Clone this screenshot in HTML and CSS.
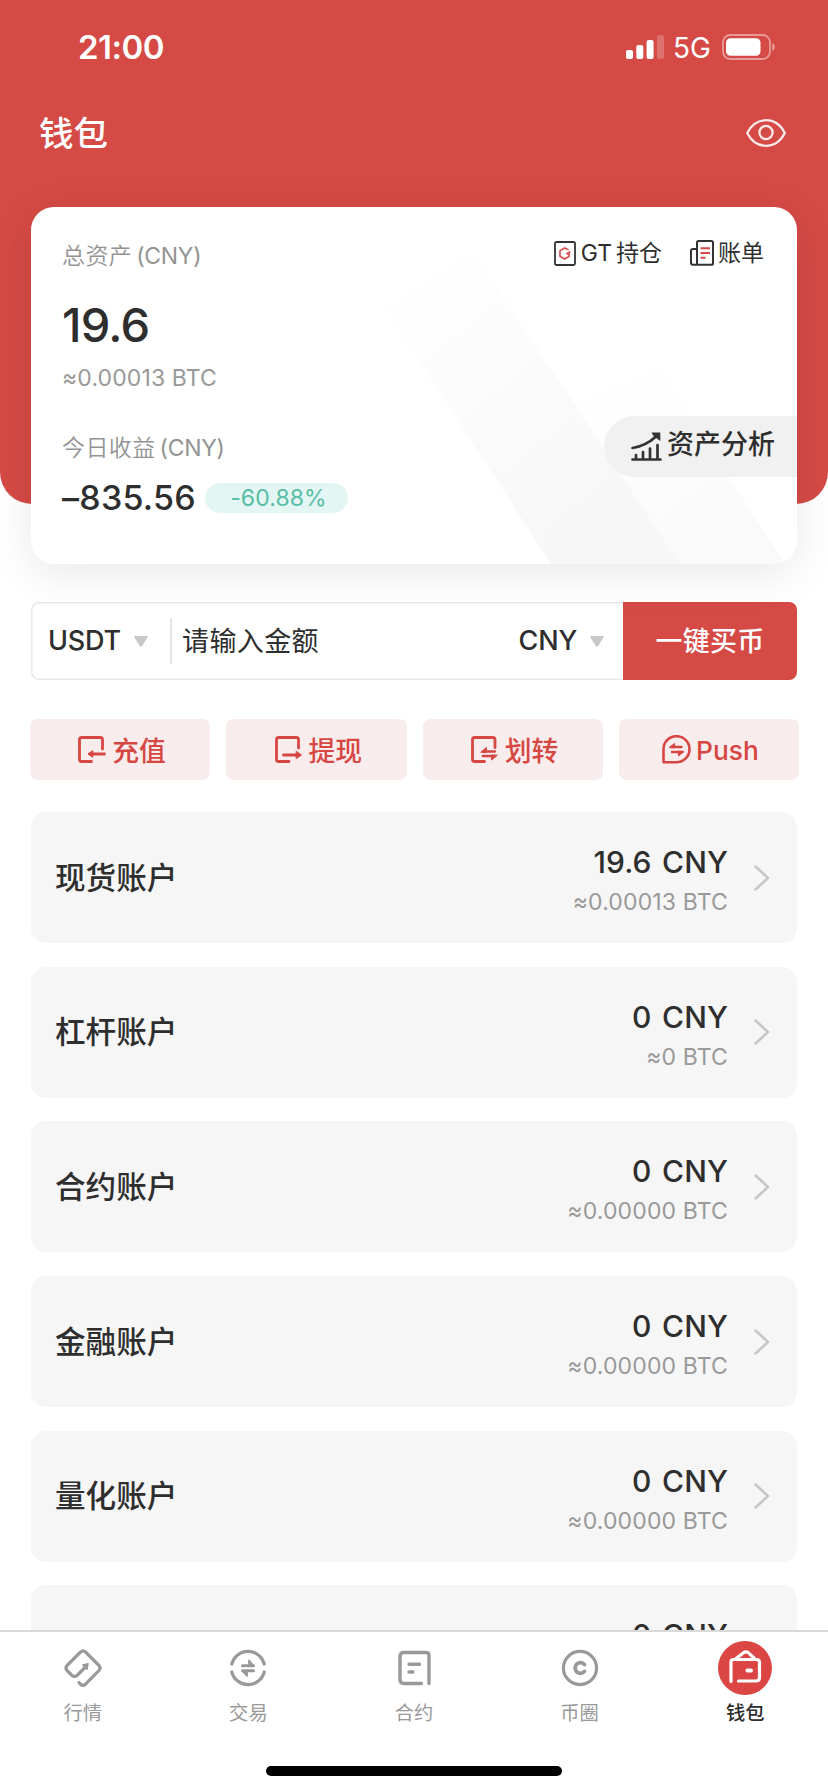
FILE: index.html
```html
<!DOCTYPE html>
<html lang="zh-CN">
<head>
<meta charset="utf-8">
<title>钱包</title>
<link rel="stylesheet" href="styles.css">
</head>
<body>
<div class="app">
  <main class="content">
    <header class="hero">
      <div class="status">
        <span class="clock">21:00</span>
        <div class="status-right">
          <svg class="signal" width="38" height="24" viewBox="0 0 38 24" fill="#fff"><rect x="0" y="15" width="7" height="9" rx="2"/><rect x="10.3" y="10" width="7" height="14" rx="2"/><rect x="20.6" y="5" width="7" height="19" rx="2"/><rect x="31" y="0" width="7" height="24" rx="2" opacity=".22"/></svg>
          <span class="network">5G</span>
          <svg class="battery" width="54" height="26" viewBox="0 0 54 26"><rect x="1" y="1" width="47" height="24" rx="7.5" fill="none" stroke="#fff" stroke-opacity=".45" stroke-width="1.8"/><rect x="4" y="4.2" width="34.5" height="17.6" rx="4.5" fill="#fff"/><path d="M50.3 9v8c3.2-1.4 3.2-6.600 0-8z" fill="#fff" opacity=".5"/></svg>
        </div>
      </div>
      <div class="titlebar">
        <h1 class="title">钱包</h1>
        <svg class="eye" width="40" height="28" viewBox="0 0 40 28" fill="none" stroke="#fff" stroke-opacity=".88" stroke-width="2.300"><path d="M1.200 14C5.500 5.500 12.500 1.200 20 1.200S34.500 5.500 38.800 14C34.500 22.500 27.500 26.800 20 26.800S5.500 22.500 1.200 14z" stroke-linejoin="round"/><circle cx="20" cy="13.500" r="6.600"/></svg>
      </div>
      <section class="card">
        <svg class="card-bg" width="766" height="357" viewBox="0 0 766 357">
          <defs>
            <linearGradient id="band" x1="0" y1="0" x2=".75" y2="1"><stop offset=".08" stop-color="#f7f7f7" stop-opacity="0"/><stop offset=".9" stop-color="#f7f7f7"/></linearGradient>
          </defs>
          <path d="M353 100L441 43L649 357H520z" fill="url(#band)"/>
          <path d="M539 189L629 163L754 357H649z" fill="url(#band)" opacity=".65"/>
        </svg>
        <div class="totals">
          <p class="label">总资产<span class="unit">(CNY)</span></p>
          <p class="total">19.6</p>
          <p class="total-btc">≈0.00013 BTC</p>
          <p class="label">今日收益<span class="unit">(CNY)</span></p>
          <p class="profit"><span class="profit-value">–835.56</span><span class="pill">-60.88%</span></p>
        </div>
        <div class="side">
          <nav class="links">
            <a class="link link-gt">
              <svg width="22" height="25" viewBox="0 0 22 25" fill="none"><rect x="1" y="1" width="20" height="23" rx="1.500" stroke="#333" stroke-width="1.800"/><path d="M14.600 8.900L10.700 7L6 9.600V15.300L10.700 18L15 15.400V12.400H12.200M13 13.400L16 10.600" stroke="#d9474a" stroke-width="1.600"/></svg>
              <span>GT<span class="gt-cjk">持仓</span></span>
            </a>
            <a class="link link-bill">
              <svg width="24" height="26" viewBox="0 0 24 26" fill="none"><path d="M7 24.800V2.600Q7 1 8.600 1H21.400Q23 1 23 2.600V23.200Q23 24.800 21.400 24.800H3Q1 24.800 1 22.800V11Q1 9 3 9H7" stroke="#333" stroke-width="2"/><path d="M10.500 8.200H20M10.500 13H20M10.500 17.800H15.500" stroke="#d9474a" stroke-width="1.900"/></svg>
              <span>账单</span>
            </a>
          </nav>
          <a class="analysis">
            <svg width="31" height="29" viewBox="0 0 31 29" fill="none" stroke="#333" stroke-width="2.700" stroke-linecap="round"><path d="M1.500 16C11 14.500 18 11 25 4.500"/><path d="M20.500 0.500H29.300V9L26.500 7L22.500 4z" fill="#333" stroke="none"/><path d="M1.500 27.500H29.500M5 27V23M12 27V20M19 27V16.500M26.500 27V13"/></svg>
            <span class="analysis-text">资产分析</span>
          </a>
        </div>
      </section>
    </header>

    <section class="buy">
      <div class="coin">USDT<i class="caret"></i></div>
      <div class="amount">请输入金额</div>
      <div class="fiat">CNY<i class="caret"></i></div>
      <button class="buy-btn">一键买币</button>
    </section>

    <section class="actions">
      <a class="action">
        <svg width="28" height="27" viewBox="0 0 28 27" fill="none" stroke="#d64642" stroke-width="2.800" stroke-linecap="round" stroke-linejoin="round"><path d="M24.500 13V3.500Q24.500 1.500 22.500 1.500H3.500Q1.500 1.500 1.500 3.500V23.500Q1.500 25.500 3.500 25.500H13.500"/><path d="M26.500 18H12"/><path d="M14.500 14.800L10 18L14.500 21.200z" fill="#d64642" stroke-width="1"/></svg>
        <span class="action-text">充值</span>
      </a>
      <a class="action">
        <svg width="28" height="27" viewBox="0 0 28 27" fill="none" stroke="#d64642" stroke-width="2.800" stroke-linecap="round" stroke-linejoin="round"><path d="M23.500 12V3.500Q23.500 1.500 21.500 1.500H3.500Q1.500 1.500 1.500 3.500V23.500Q1.500 25.500 3.500 25.500H14"/><path d="M8.500 19H23"/><path d="M21.500 15.500L26.500 19L21.500 22.500z" fill="#d64642" stroke-width="1"/></svg>
        <span class="action-text">提现</span>
      </a>
      <a class="action">
        <svg width="28" height="27" viewBox="0 0 28 27" fill="none" stroke="#d64642" stroke-width="2.800" stroke-linecap="round" stroke-linejoin="round"><path d="M24 11.500V3.500Q24 1.500 22 1.500H3.500Q1.500 1.500 1.500 3.500V23.500Q1.500 25.500 3.500 25.500H13.500"/><path d="M12 15.500H24M12 20H24" stroke-width="2.500"/><path d="M10 16L15.500 11.500V16zM26 19.500L20.500 24V19.500z" fill="#d64642" stroke-width="1"/></svg>
        <span class="action-text">划转</span>
      </a>
      <a class="action action-push">
        <svg width="29" height="29" viewBox="0 0 29 29" fill="none" stroke="#d64642" stroke-width="2.600" stroke-linecap="round" stroke-linejoin="round"><path d="M1.500 27.200V14.500A13 13 0 1 1 14.500 27.200z"/><path d="M9 12H19.500M10 17H20.500" stroke-width="2.400"/><path d="M7.500 12.300L12.500 8.500V12.300zM21.500 16.700L16.500 21V16.700z" fill="#d64642" stroke-width="1"/></svg>
        <span class="action-text">Push</span>
      </a>
    </section>

    <section class="accounts">
      <a class="account"><span class="name">现货账户</span><span class="balance"><b class="value">19.6 CNY</b><span class="btc">≈0.00013 BTC</span></span><svg class="chev" width="16" height="26" viewBox="0 0 16 26"><path d="M1.500 1.500L14 13L1.500 24.500"/></svg></a>
      <a class="account"><span class="name">杠杆账户</span><span class="balance"><b class="value">0 CNY</b><span class="btc">≈0 BTC</span></span><svg class="chev" width="16" height="26" viewBox="0 0 16 26"><path d="M1.500 1.500L14 13L1.500 24.500"/></svg></a>
      <a class="account"><span class="name">合约账户</span><span class="balance"><b class="value">0 CNY</b><span class="btc">≈0.00000 BTC</span></span><svg class="chev" width="16" height="26" viewBox="0 0 16 26"><path d="M1.500 1.500L14 13L1.500 24.500"/></svg></a>
      <a class="account"><span class="name">金融账户</span><span class="balance"><b class="value">0 CNY</b><span class="btc">≈0.00000 BTC</span></span><svg class="chev" width="16" height="26" viewBox="0 0 16 26"><path d="M1.500 1.500L14 13L1.500 24.500"/></svg></a>
      <a class="account"><span class="name">量化账户</span><span class="balance"><b class="value">0 CNY</b><span class="btc">≈0.00000 BTC</span></span><svg class="chev" width="16" height="26" viewBox="0 0 16 26"><path d="M1.500 1.500L14 13L1.500 24.500"/></svg></a>
      <a class="account"><span class="balance"><b class="value">0 CNY</b></span><span class="chev"></span></a>
    </section>
  </main>

  <nav class="tabbar">
    <div class="tabs">
      <a class="tab">
        <svg width="54" height="54" viewBox="0 0 54 54" fill="none" stroke="#999" stroke-width="3.200" stroke-linecap="round" stroke-linejoin="round"><path d="M23 41.500L24.500 43.200Q27 45.500 29.500 43.200L43 29.500Q45.200 27 43 24.500L29.500 11Q27 8.800 24.500 11L11 24.500Q8.800 27 11 29.500L16 34.500Q18.500 36.500 21 34.500L29.500 26"/><path d="M26.800 24L32 22.700L31 28.200z" fill="#999" stroke-width="1.500"/></svg>
        <span>行情</span>
      </a>
      <a class="tab">
        <svg width="54" height="54" viewBox="0 0 54 54" fill="none" stroke="#999" stroke-width="3.200" stroke-linecap="round" stroke-linejoin="round"><path d="M10.800 23A16.700 16.700 0 0 1 43.200 23M10.800 31A16.700 16.700 0 0 0 43.200 31"/><path d="M21.500 24.800H32.500M21.500 29.800H32.500" stroke-width="3"/><path d="M28 19.500L32.500 24.500H28zM26 35L21.500 30H26z" fill="#999" stroke-width="1.800"/></svg>
        <span>交易</span>
      </a>
      <a class="tab">
        <svg width="54" height="54" viewBox="0 0 54 54" fill="none" stroke="#999" stroke-width="3.400" stroke-linecap="round" stroke-linejoin="round"><path d="M42 42.500V14.500Q42 11.500 39 11.500H17Q13 11.500 13 15.500V38.500Q13 42.500 17 42.500H34.500M22 23.300H32.500M22 31H26"/></svg>
        <span>合约</span>
      </a>
      <a class="tab">
        <svg width="54" height="54" viewBox="0 0 54 54" fill="none" stroke="#999" stroke-width="3.200" stroke-linecap="round"><circle cx="27" cy="27" r="16.600"/><path d="M31.500 23.600A5.300 5.300 0 1 0 31.500 30.400" stroke-width="3.800"/></svg>
        <span>币圈</span>
      </a>
      <a class="tab tab-on">
        <svg width="54" height="54" viewBox="0 0 54 54" fill="none" stroke="#fff" stroke-width="3.200" stroke-linecap="round" stroke-linejoin="round"><circle cx="27" cy="27" r="27" fill="#db4644" stroke="none"/><path d="M13 40.500V21Q13 18.500 15.500 18.500H38.500Q41.500 18.500 41.500 21.500V36.500Q41.500 40 38 40H20.500"/><path d="M18 17.500L25.500 11.800Q28 10 30.500 11.800L36.500 17.500"/><path d="M29.500 29.500H33" stroke-width="4"/></svg>
        <span>钱包</span>
      </a>
    </div>
    <div class="home"></div>
  </nav>
</div>
</body>
</html>
```
FILE: styles.css
```css
* { box-sizing: border-box; margin: 0; padding: 0; }

body {
  background: #fff;
  color: #2e2e2e;
  font-family: Inter, "Noto Sans CJK SC", sans-serif;
  overflow: hidden;
}

svg { display: block; flex: none; }

.app { display: flex; flex-direction: column; width: 828px; height: 1792px; overflow: hidden; }
.content { flex: 1; min-height: 0; overflow: hidden; }

/* Header */
.hero { height: 504px; padding: 0 31px; background: #d54a45; border-radius: 0 0 32px 32px; color: #fff; }
.status { display: flex; justify-content: space-between; align-items: center; height: 94px; padding: 0 21px 0 47px; }
.clock { font-size: 33px; font-weight: 600; line-height: 40px; letter-spacing: -.5px; }
.status-right { display: flex; align-items: center; }
.network { margin: 1px 11px 0 9px; font-size: 28px; line-height: 32px; }
.titlebar { display: flex; justify-content: space-between; align-items: center; height: 78px; padding: 0 11px 0 8px; }
.title { padding-top: 2px; font-size: 34.500px; font-weight: 500; line-height: 40px; }

/* Balance card */
.card {
  position: relative;
  display: flex;
  justify-content: space-between;
  height: 357px;
  margin-top: 35px;
  border-radius: 23px;
  background: #fff;
  color: #2e2e2e;
  box-shadow: 0 10px 44px rgba(0, 0, 0, .09);
  overflow: hidden;
}
.card-bg { position: absolute; left: 0; top: 0; }
.totals { position: relative; padding: 34px 0 0 31px; }
.label { font-size: 23px; font-weight: 350; line-height: 30px; color: #939393; letter-spacing: .4px; }
.unit { margin-left: 4px; font-weight: 400; letter-spacing: -.3px; }
.total { margin-top: 29px; font-size: 47px; font-weight: 500; line-height: 50px; letter-spacing: -.8px; }
.total-btc { margin: 13px 0 40px; font-size: 23px; line-height: 30px; color: #999; letter-spacing: .12px; }
.profit { display: flex; align-items: center; margin-top: 20px; }
.profit-value { font-size: 34px; font-weight: 500; line-height: 30px; letter-spacing: .25px; }
.pill { width: 143px; height: 30px; margin-left: 9px; padding-left: 4px; border-radius: 15px; background: #e3f6f3; color: #58bda3; font-size: 23px; line-height: 30px; text-align: center; letter-spacing: .1px; }
.side { position: relative; display: flex; flex-direction: column; align-items: flex-end; padding-top: 31px; }
.links { display: flex; gap: 28px; margin-right: 33px; }
.link { display: flex; align-items: center; gap: 4px; font-size: 23px; line-height: 30px; }
.link-gt { gap: 5px; }
.gt-cjk { margin-left: 4px; }
.analysis { display: flex; align-items: center; width: 193px; height: 61px; margin-top: 148px; padding-left: 27px; gap: 5px; border-radius: 31px 0 0 31px; background: #f1f1f1; font-size: 27px; font-weight: 500; line-height: 40px; }
.analysis-text { padding-bottom: 4px; }

/* Quick buy */
.buy { display: flex; align-items: center; height: 78px; margin: 98px 31px 0; border-radius: 8px; background: #fff; box-shadow: inset 0 0 0 1.500px #e9e9e9; font-size: 27px; line-height: 40px; overflow: hidden; }
.coin { display: flex; align-items: center; width: 141px; height: 46px; padding-left: 17px; border-right: 2px solid #e3e3e3; font-weight: 500; letter-spacing: -.2px; }
.caret { width: 14px; height: 11px; margin-left: 13px; background: #c9c9c9; clip-path: polygon(0 12%, 10% 0, 90% 0, 100% 12%, 57% 100%, 43% 100%); }
.amount { flex: 1; padding: 2px 0 0 10px; letter-spacing: .4px; }
.fiat { display: flex; align-items: center; margin-right: 19px; font-weight: 500; letter-spacing: -.2px; }
.buy-btn { width: 174px; height: 78px; padding-top: 1px; border: 0; background: #d54a45; color: #fff; font: 500 27px/76px Inter, "Noto Sans CJK SC", sans-serif; letter-spacing: .2px; }

/* Actions */
.actions { display: grid; grid-template-columns: repeat(4, 1fr); gap: 16px; margin: 39px 29px 0 30px; }
.action { display: flex; align-items: center; justify-content: center; gap: 6px; height: 61px; padding-left: 4px; border-radius: 8px; background: #f9ecec; color: #d64642; font-size: 26.800px; font-weight: 500; line-height: 40px; }
.action-text { padding-top: 2px; }
.action-push { padding-left: 3px; gap: 5px; font-size: 26.300px; }

/* Accounts */
.accounts { display: flex; flex-direction: column; gap: 23.700px; margin: 32px 31px 0; }
.account { display: flex; align-items: center; height: 131px; padding: 0 27px 0 24px; border-radius: 15px; background: #f6f6f6; }
.name { font-size: 30.600px; font-weight: 500; line-height: 40px; }
.balance { display: flex; flex-direction: column; align-items: flex-end; align-self: flex-start; margin: 30px 26px 0 auto; }
.value { font-size: 30px; font-weight: 500; line-height: 40px; letter-spacing: .1px; word-spacing: 2.500px; }
.btc { margin-top: 5px; font-size: 23px; line-height: 30px; color: #999; letter-spacing: .15px; }
.chev { width: 16px; fill: none; stroke: #c6c6c6; stroke-width: 2.500; stroke-linecap: round; stroke-linejoin: round; }

/* Tab bar */
.tabbar { flex: none; height: 162px; border-top: 2px solid #d9d9d9; background: #fff; }
.tabs { display: grid; grid-template-columns: repeat(5, 1fr); padding-top: 9px; }
.tab { display: flex; flex-direction: column; align-items: center; color: #999; font-size: 19.300px; line-height: 30px; gap: 3px; }
.tab-on { color: #2e2e2e; font-weight: 500; }
.home { width: 296px; height: 10px; margin: 38px auto 0; border-radius: 5px; background: #000; }
```
